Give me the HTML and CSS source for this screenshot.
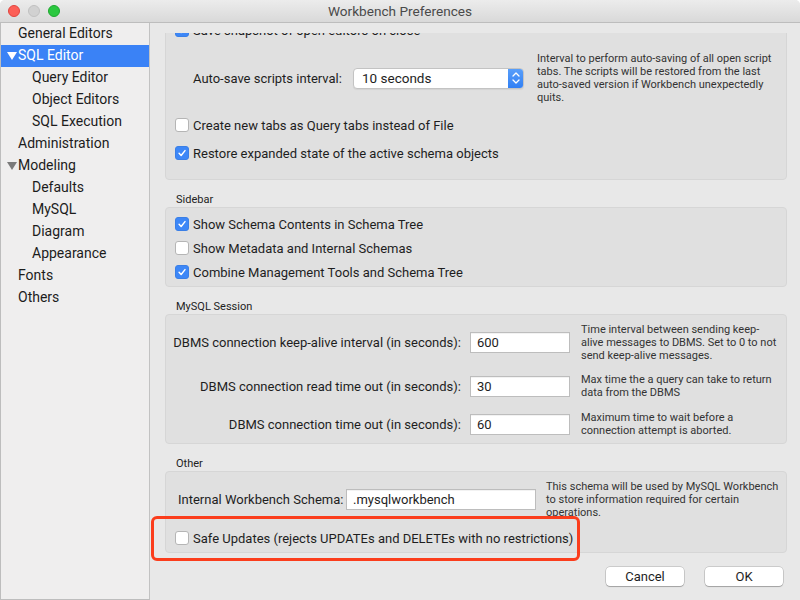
FILE: index.html
```html
<!DOCTYPE html>
<html>
<head>
<meta charset="utf-8">
<link rel="stylesheet" href="styles.css">
</head>
<body>
<div class="window">
  <div class="titlebar">
    <div class="lights">
      <span class="light red"></span>
      <span class="light gray"></span>
      <span class="light green"></span>
    </div>
    <div class="title">Workbench Preferences</div>
  </div>
  <div class="content">
    <div class="sidebar">
      <div class="item">General Editors</div>
      <div class="item selected"><span class="tri white"></span>SQL Editor</div>
      <div class="item child">Query Editor</div>
      <div class="item child">Object Editors</div>
      <div class="item child">SQL Execution</div>
      <div class="item">Administration</div>
      <div class="item"><span class="tri"></span>Modeling</div>
      <div class="item child">Defaults</div>
      <div class="item child">MySQL</div>
      <div class="item child">Diagram</div>
      <div class="item child">Appearance</div>
      <div class="item">Fonts</div>
      <div class="item">Others</div>
    </div>
    <div class="main">
      <div class="scroll">
        <div class="scroll-inner">
          <div class="panel p1">
            <div class="crow"><span class="cb on"><svg viewBox="0 0 14 14"><path d="M3.6 7.4 L6 9.9 L10.5 4.2"/></svg></span>Save snapshot of open editors on close</div>
            <div class="autosave">
              <span class="lbl">Auto-save scripts interval:</span>
              <div class="select"><span class="seltext">10 seconds</span><span class="stepper"><svg viewBox="0 0 16 20"><path d="M5 8 L8 5 L11 8 M5 12 L8 15 L11 12"/></svg></span></div>
              <div class="desc w240">Interval to perform auto-saving of all open script tabs. The scripts will be restored from the last auto-saved version if Workbench unexpectedly quits.</div>
            </div>
            <div class="crow c3"><span class="cb"></span>Create new tabs as Query tabs instead of File</div>
            <div class="crow c4"><span class="cb on"><svg viewBox="0 0 14 14"><path d="M3.6 7.4 L6 9.9 L10.5 4.2"/></svg></span>Restore expanded state of the active schema objects</div>
          </div>

          <div class="sect">Sidebar</div>
          <div class="panel p2">
            <div class="crow r24"><span class="cb on"><svg viewBox="0 0 14 14"><path d="M3.6 7.4 L6 9.9 L10.5 4.2"/></svg></span>Show Schema Contents in Schema Tree</div>
            <div class="crow r24"><span class="cb"></span>Show Metadata and Internal Schemas</div>
            <div class="crow r24"><span class="cb on"><svg viewBox="0 0 14 14"><path d="M3.6 7.4 L6 9.9 L10.5 4.2"/></svg></span>Combine Management Tools and Schema Tree</div>
          </div>

          <div class="sect">MySQL Session</div>
          <div class="panel p3">
            <div class="grow h44">
              <span class="glbl">DBMS connection keep-alive interval (in seconds):</span>
              <span class="input w100">600</span>
              <div class="desc">Time interval between sending keep-alive messages to DBMS. Set to 0 to not send keep-alive messages.</div>
            </div>
            <div class="grow h44">
              <span class="glbl">DBMS connection read time out (in seconds):</span>
              <span class="input w100">30</span>
              <div class="desc">Max time the a query can take to return data from the DBMS</div>
            </div>
            <div class="grow h32">
              <span class="glbl">DBMS connection time out (in seconds):</span>
              <span class="input w100">60</span>
              <div class="desc">Maximum time to wait before a connection attempt is aborted.</div>
            </div>
          </div>

          <div class="sect">Other</div>
          <div class="panel p4">
            <div class="orow">
              <span class="olbl">Internal Workbench Schema:</span>
              <span class="input w190">.mysqlworkbench</span>
              <div class="desc w235">This schema will be used by MySQL Workbench to store information required for certain operations.</div>
            </div>
            <div class="crow c5"><span class="cb"></span>Safe Updates (rejects UPDATEs and DELETEs with no restrictions)</div>
          </div>
        </div>
      </div>
      <div class="footer">
        <button class="btn">Cancel</button>
        <button class="btn">OK</button>
      </div>
      <div class="highlight"></div>
    </div>
  </div>
</div>
</body>
</html>
```

FILE: styles.css
```css
* { box-sizing: border-box; }
html, body { margin: 0; padding: 0; }
body {
  width: 800px;
  height: 600px;
  overflow: hidden;
  background: #ffffff;
  font-family: "Roboto", "Liberation Sans", sans-serif;
  font-size: 13px;
  color: #1e1e1e;
}
.window {
  width: 800px;
  height: 600px;
  display: flex;
  flex-direction: column;
  background: #e8e8e8;
  border-radius: 5px 5px 0 0;
  overflow: hidden;
}
.titlebar {
  height: 23px;
  flex: none;
  position: relative;
  background: linear-gradient(#ececec, #d9d9d9);
  border-bottom: 1px solid #bdbdbd;
  display: flex;
  align-items: center;
  justify-content: center;
}
.lights {
  position: absolute;
  left: 8px;
  top: 5px;
  display: flex;
  gap: 8px;
}
.light {
  width: 12px;
  height: 12px;
  border-radius: 50%;
  display: block;
}
.light.red { background: #fc5f57; border: 1px solid #e0443e; }
.light.gray { background: #d1d1d1; border: 1px solid #c0c0c0; }
.light.green { background: #2bc840; border: 1px solid #1ea72f; }
.title {
  color: #4a4a4a;
  font-size: 13.6px;
}
.content {
  flex: 1;
  display: flex;
  min-height: 0;
}
.sidebar {
  width: 150px;
  flex: none;
  background: #efeeee;
  border-left: 1px solid #bdbdbd;
  border-right: 1px solid #c2c2c2;
  border-bottom: 1px solid #bdbdbd;
  height: 577px;
  font-size: 14px;
}
.item {
  height: 22px;
  line-height: 21px;
  padding-left: 17px;
  position: relative;
  color: #1c1c1c;
  white-space: nowrap;
}
.item.child { padding-left: 31px; }
.item.selected {
  background: #3a82f6;
  color: #ffffff;
}
.tri {
  position: absolute;
  left: 6px;
  top: 7px;
  width: 0;
  height: 0;
  border-left: 5px solid transparent;
  border-right: 5px solid transparent;
  border-top: 8px solid #7a7a7a;
}
.tri.white { border-top-color: #ffffff; }
.main {
  flex: 1;
  position: relative;
  display: flex;
  flex-direction: column;
  padding-top: 10px;
}
.scroll {
  height: 523px;
  overflow: hidden;
  flex: none;
}
.scroll-inner {
  margin-top: -25px;
  padding-left: 15px;
  padding-right: 13px;
}
.panel {
  background: #e0e0e0;
  border: 1px solid #d6d6d6;
  border-radius: 4px;
}
.p1 { padding: 10px 0 15px 9px; }
.crow {
  display: flex;
  align-items: center;
  height: 22px;
  white-space: nowrap;
}
.cb {
  width: 14px;
  height: 14px;
  border-radius: 3px;
  background: #ffffff;
  border: 1px solid #b5b5b5;
  margin-right: 4px;
  flex: none;
  display: flex;
}
.cb.on {
  background: #3d87f7;
  border-color: #3a7fe6;
}
.cb svg { width: 12px; height: 12px; }
.cb svg path {
  fill: none;
  stroke: #ffffff;
  stroke-width: 1.7;
  stroke-linecap: round;
  stroke-linejoin: round;
}
.autosave {
  display: flex;
  align-items: center;
  height: 60px;
  margin-top: 7px;
  padding-left: 18px;
}
.lbl { white-space: nowrap; width: 160px; }
.select {
  width: 171px;
  height: 21px;
  background: #ffffff;
  border: 1px solid #c3c3c3;
  border-radius: 4px;
  display: flex;
  align-items: center;
  justify-content: space-between;
  margin-right: 13px;
  flex: none;
  overflow: hidden;
  box-shadow: 0 1px 1px rgba(0,0,0,0.06);
}
.seltext { padding-left: 8px; font-size: 13.5px; }
.stepper {
  width: 16px;
  height: 21px;
  margin-right: -1px;
  background: linear-gradient(#5aa0fa, #2f7ef4);
  border-radius: 0 4px 4px 0;
  display: flex;
}
.stepper svg { width: 16px; height: 20px; }
.stepper svg path {
  fill: none;
  stroke: #ffffff;
  stroke-width: 1.3;
  stroke-linecap: round;
  stroke-linejoin: round;
}
.desc {
  font-size: 11px;
  line-height: 13px;
  color: #333333;
}
.w240 { width: 240px; }
.w235 { width: 235px; }
.c3 { margin-top: 6px; }
.c4 { margin-top: 6px; }
.sect {
  font-size: 11px;
  height: 14px;
  line-height: 14px;
  margin-top: 13px;
  padding-left: 11px;
  color: #222222;
}
.p2 { padding: 4px 0 2px 9px; }
.r24 { height: 24px; }
.p3 { padding-top: 5px; padding-bottom: 3px; }
.grow {
  display: flex;
  align-items: center;
}
.h44 { height: 44px; }
.h32 { height: 32px; }
.glbl {
  width: 295px;
  text-align: right;
  white-space: nowrap;
  margin-right: 9px;
  flex: none;
}
.input {
  height: 21px;
  background: #ffffff;
  border: 1px solid #bdbdbd;
  box-shadow: inset 0 1px 0 rgba(0,0,0,0.05);
  display: flex;
  align-items: center;
  padding-left: 6px;
  font-size: 13px;
  flex: none;
}
.w100 { width: 100px; margin-right: 11px; }
.w190 { width: 190px; margin-right: 10px; }
.p3 .desc { width: 200px; }
.p4 { padding: 7px 0 3px 9px; }
.orow {
  display: flex;
  align-items: center;
  height: 40px;
}
.olbl {
  width: 171px;
  padding-left: 3px;
  white-space: nowrap;
  flex: none;
}
.c5 { margin-top: 8px; }
.footer {
  display: flex;
  justify-content: flex-end;
  gap: 21px;
  padding: 11px 17px 0 0;
}
.btn {
  width: 78px;
  height: 19px;
  background: #ffffff;
  border: none;
  border-radius: 4px;
  box-shadow: 0 0 0 0.5px rgba(0,0,0,0.25), 0 1px 1px rgba(0,0,0,0.2);
  font-family: "Roboto", "Liberation Sans", sans-serif;
  font-size: 13px;
  color: #1e1e1e;
  padding: 0;
}
.highlight {
  position: absolute;
  left: 1px;
  top: 493px;
  width: 429px;
  height: 45px;
  border: 3px solid #fb3d1c;
  border-radius: 6px;
  pointer-events: none;
}
```
